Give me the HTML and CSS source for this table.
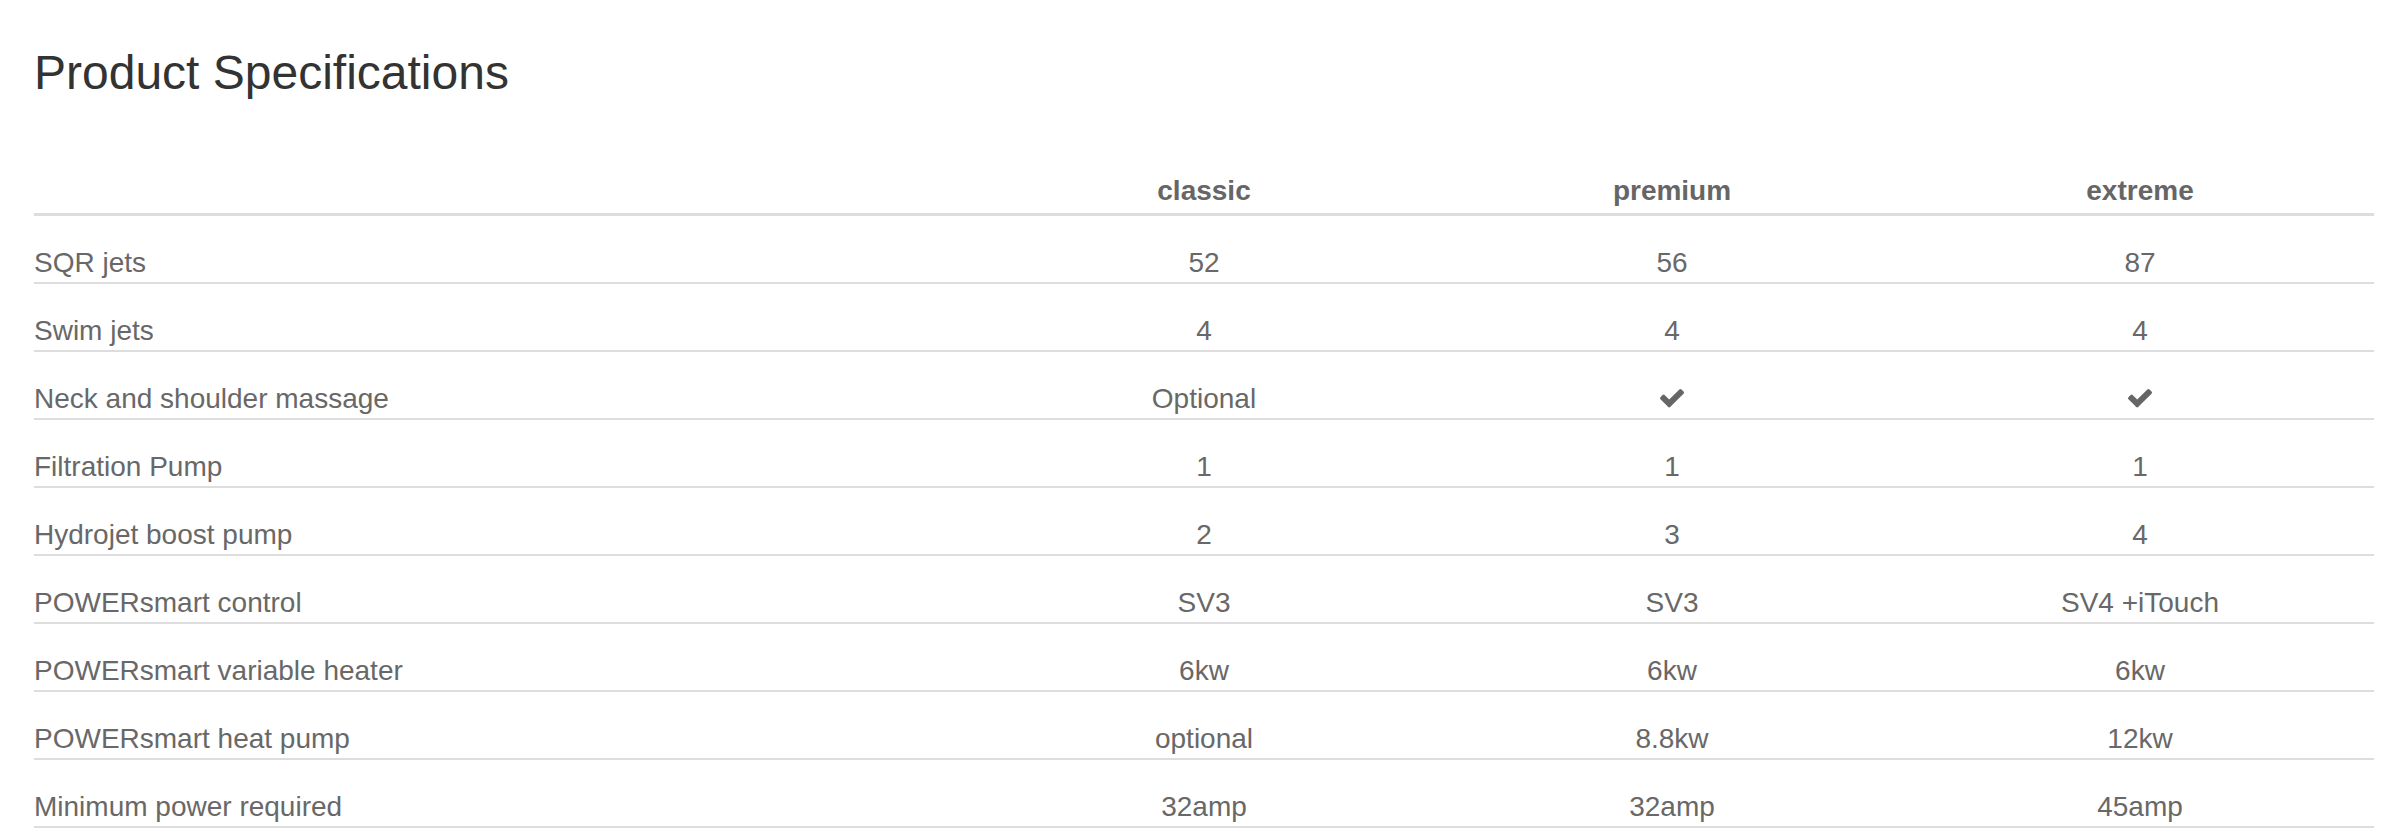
FILE: index.html
```html
<!DOCTYPE html>
<html lang="en">
<head>
<meta charset="utf-8">
<title>Product Specifications</title>
<link rel="stylesheet" href="styles.css">
</head>
<body>
<div class="page">
  <h1 class="title">Product Specifications</h1>
  <div class="specs">
    <div class="row head">
      <div class="cell label"></div>
      <div class="cell val">classic</div>
      <div class="cell val">premium</div>
      <div class="cell val">extreme</div>
    </div>
    <div class="row">
      <div class="cell label">SQR jets</div>
      <div class="cell val">52</div>
      <div class="cell val">56</div>
      <div class="cell val">87</div>
    </div>
    <div class="row">
      <div class="cell label">Swim jets</div>
      <div class="cell val">4</div>
      <div class="cell val">4</div>
      <div class="cell val">4</div>
    </div>
    <div class="row">
      <div class="cell label">Neck and shoulder massage</div>
      <div class="cell val">Optional</div>
      <div class="cell val"><svg class="check" viewBox="121 334 1550 1188" aria-label="yes"><path d="M1671 566q0 40-28 68l-724 724-136 136q-28 28-68 28t-68-28l-136-136-362-362q-28-28-28-68t28-68l136-136q28-28 68-28t68 28l294 295 656-657q28-28 68-28t68 28l136 136q28 28 28 68z"/></svg></div>
      <div class="cell val"><svg class="check" viewBox="121 334 1550 1188" aria-label="yes"><path d="M1671 566q0 40-28 68l-724 724-136 136q-28 28-68 28t-68-28l-136-136-362-362q-28-28-28-68t28-68l136-136q28-28 68-28t68 28l294 295 656-657q28-28 68-28t68 28l136 136q28 28 28 68z"/></svg></div>
    </div>
    <div class="row">
      <div class="cell label">Filtration Pump</div>
      <div class="cell val">1</div>
      <div class="cell val">1</div>
      <div class="cell val">1</div>
    </div>
    <div class="row">
      <div class="cell label">Hydrojet boost pump</div>
      <div class="cell val">2</div>
      <div class="cell val">3</div>
      <div class="cell val">4</div>
    </div>
    <div class="row">
      <div class="cell label">POWERsmart control</div>
      <div class="cell val">SV3</div>
      <div class="cell val">SV3</div>
      <div class="cell val">SV4 +iTouch</div>
    </div>
    <div class="row">
      <div class="cell label">POWERsmart variable heater</div>
      <div class="cell val">6kw</div>
      <div class="cell val">6kw</div>
      <div class="cell val">6kw</div>
    </div>
    <div class="row">
      <div class="cell label">POWERsmart heat pump</div>
      <div class="cell val">optional</div>
      <div class="cell val">8.8kw</div>
      <div class="cell val">12kw</div>
    </div>
    <div class="row">
      <div class="cell label">Minimum power required</div>
      <div class="cell val">32amp</div>
      <div class="cell val">32amp</div>
      <div class="cell val">45amp</div>
    </div>
  </div>
</div>
</body>
</html>
```

FILE: styles.css
```css
html, body {
  margin: 0;
  padding: 0;
  background: #ffffff;
}

.page {
  padding: 47px 28px 0 34px;
  font-family: "Liberation Sans", Arial, Helvetica, sans-serif;
  color: #686868;
}

.title {
  margin: 0;
  font-size: 48px;
  line-height: 52.8px;
  font-weight: normal;
  color: #333333;
}

.specs {
  margin-top: 76px;
}

.row {
  display: grid;
  grid-template-columns: 2fr 1fr 1fr 1fr;
  align-items: end;
  height: 68px;
  box-sizing: border-box;
  padding-bottom: 5px;
  border-bottom: 2px solid #dddddd;
  font-size: 28px;
  line-height: 28px;
}

.row.head {
  height: 40px;
  padding-bottom: 8px;
  border-bottom: 3px solid #dddddd;
  font-weight: bold;
  color: #666666;
}

.cell.label {
  text-align: left;
}

.cell.val {
  text-align: center;
}

.check {
  width: 24px;
  height: 18.4px;
  fill: #666666;
  vertical-align: 0;
}
```
